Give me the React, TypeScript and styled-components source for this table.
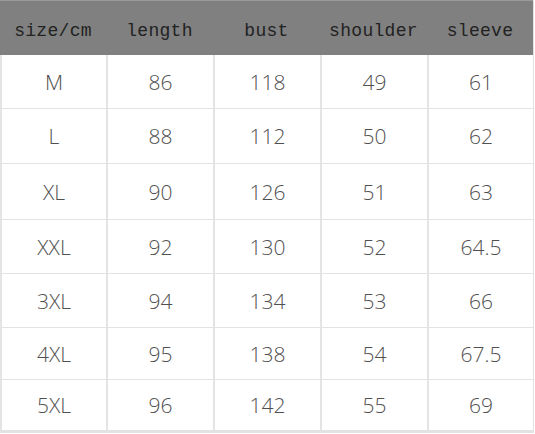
import React from 'react';
import styled, { createGlobalStyle } from 'styled-components';

const GlobalStyle = createGlobalStyle`
    html, body {
        margin: 0;
        padding: 0;
        background: #ffffff;
    }
`;

const columns = ['size/cm', 'length', 'bust', 'shoulder', 'sleeve'];

const rows: string[][] = [
    ['M', '86', '118', '49', '61'],
    ['L', '88', '112', '50', '62'],
    ['XL', '90', '126', '51', '63'],
    ['XXL', '92', '130', '52', '64.5'],
    ['3XL', '94', '134', '53', '66'],
    ['4XL', '95', '138', '54', '67.5'],
    ['5XL', '96', '142', '55', '69'],
];

function App(): JSX.Element {
    return (
        <>
            <GlobalStyle />
            <Page>
                <Table>
                    {columns.map((c) => (
                        <HeadCell key={c}>{c}</HeadCell>
                    ))}
                    {rows.map((r, ri) =>
                        r.map((v, ci) => (
                            <Cell key={`${ri}-${ci}`}>{v}</Cell>
                        ))
                    )}
                </Table>
            </Page>
        </>
    );
}

export default App;

const Page = styled.div`
    width: 535px;
    height: 434px;
    background: #ffffff;
    overflow: hidden;
`;

const Table = styled.div`
    width: 533px;
    display: grid;
    grid-template-columns: 106px 107px 107px 107px 106px;
    grid-template-rows: 55px 54px 55px 56px 54px 54px 52px 51px;
    border-right: 1px solid #e2e2e2;
    border-bottom: 2px solid #e2e2e2;
`;

const HeadCell = styled.div`
    display: flex;
    align-items: center;
    justify-content: center;
    padding-top: 6px;
    box-sizing: border-box;
    background: #808080;
    border-top: 1px solid #9a9a9a;
    font-family: "Liberation Mono", "DejaVu Sans Mono", monospace;
    font-size: 18px;
    letter-spacing: 0.3px;
    color: #222222;
`;

const Cell = styled.div`
    display: flex;
    align-items: center;
    justify-content: center;
    box-sizing: border-box;
    border-left: 2px solid #e4e4e4;
    border-bottom: 1px solid #e2e2e2;
    font-family: "Open Sans", "Noto Sans", sans-serif;
    font-weight: 300;
    font-size: 21px;
    color: #505050;
`;
